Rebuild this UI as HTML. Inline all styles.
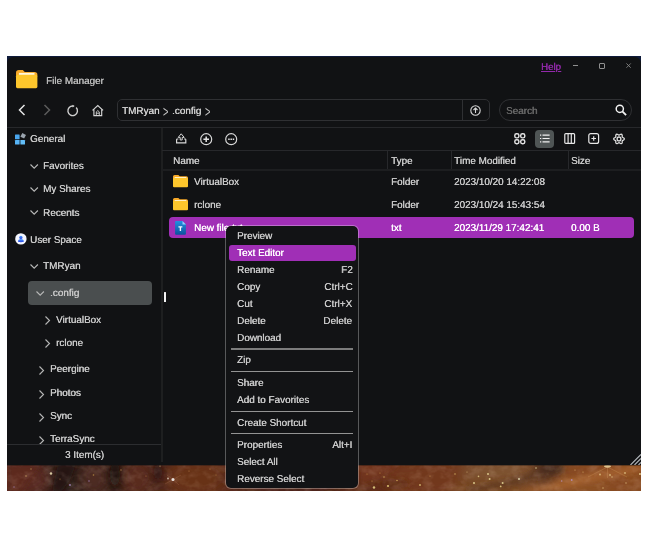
<!DOCTYPE html>
<html>
<head>
<meta charset="utf-8">
<title>File Manager</title>
<style>
*{box-sizing:border-box;margin:0;padding:0}
html,body{width:648px;height:550px;background:#fff;overflow:hidden}
body{font-family:"Liberation Sans",sans-serif;font-size:11px;color:#cbcbcb;position:relative}
.shot{position:absolute;left:7px;top:56px;width:634px;height:435px;overflow:hidden;
 background:#101b3c}
.shot .topstrip{position:absolute;left:0;top:0;width:100%;height:3px;background:#0e1a3a}
.win{position:absolute;left:0;top:1px;width:634px;height:408px;background:#111214;border-radius:6px 6px 0 0;overflow:hidden}
.abs{position:absolute;white-space:nowrap}
.t{position:absolute;white-space:nowrap;font-size:10px;line-height:14px;height:14px;margin-top:2px;text-rendering:geometricPrecision;transform:scaleX(.99);transform-origin:0 50%;text-shadow:0.3px 0 0 currentColor}
.sepc{font-size:16px;line-height:16px;height:16px;transform:scaleX(.58);color:#c4c4c4;text-shadow:none}
.line{position:absolute;background:#27282b}
svg{position:absolute;overflow:visible}
.menu{position:absolute;left:218px;top:169px;width:134px;height:264px;background:#121315;border:1px solid rgba(255,255,255,.3);background-clip:padding-box;border-radius:6px}
.menu .t{left:11px}
.menu .r{left:auto;right:5.7px;transform-origin:100% 50%}
.menu .sep{position:absolute;left:5px;width:122px;height:1px;background:#939393}
</style>
</head>
<body>
<div class="shot">
 <div class="topstrip"></div>
 <svg style="left:0;top:408px" width="634" height="27" viewBox="7 464 634 27" preserveAspectRatio="none">
<defs><filter id="bl" x="-20%" y="-50%" width="140%" height="200%"><feGaussianBlur stdDeviation="6"/></filter><filter id="bl2" x="-20%" y="-50%" width="140%" height="200%"><feGaussianBlur stdDeviation="2.5"/></filter><filter id="sb"><feGaussianBlur stdDeviation="0.6"/></filter>
<filter id="nz" x="0" y="0" width="100%" height="100%"><feTurbulence type="fractalNoise" baseFrequency="0.09 0.12" numOctaves="3" seed="7" result="n"/><feColorMatrix in="n" type="matrix" values="0 0 0 0 1  0 0 0 0 0.75  0 0 0 0 0.6  0.9 0.3 0 0 -0.52"/></filter>
<linearGradient id="bgl" x1="0" x2="1" y1="0" y2="0"><stop offset="0" stop-color="#4e271f"/><stop offset="0.12" stop-color="#321f1a"/><stop offset="0.28" stop-color="#5e2d1b"/><stop offset="0.45" stop-color="#5a2a1b"/><stop offset="0.62" stop-color="#6e361e"/><stop offset="0.8" stop-color="#7a4c2b"/><stop offset="0.9" stop-color="#814923"/><stop offset="1" stop-color="#864b22"/></linearGradient></defs>
<rect x="7" y="464" width="634" height="27" fill="url(#bgl)"/>
<g filter="url(#bl)">
<ellipse cx="22" cy="478" rx="26" ry="18" fill="#5a2c22"/>
<ellipse cx="65" cy="478" rx="15" ry="18" fill="#2b1a16"/>
<ellipse cx="94" cy="478" rx="13" ry="18" fill="#4e2a20"/>
<ellipse cx="115" cy="476" rx="8" ry="18" fill="#22130f"/>
<ellipse cx="137" cy="478" rx="14" ry="18" fill="#5a2b1d"/>
<ellipse cx="158" cy="474" rx="7" ry="14" fill="#3a1c14"/>
<ellipse cx="196" cy="478" rx="30" ry="18" fill="#683019"/>
<ellipse cx="292" cy="478" rx="70" ry="18" fill="#4a2418"/>
<ellipse cx="385" cy="474" rx="30" ry="14" fill="#6c321d"/>
<ellipse cx="372" cy="487" rx="22" ry="7" fill="#5c2c18"/>
<ellipse cx="430" cy="478" rx="40" ry="18" fill="#72391e"/>
<ellipse cx="495" cy="474" rx="34" ry="12" fill="#7e5230"/>
<ellipse cx="490" cy="487" rx="40" ry="7" fill="#75441f"/>
<ellipse cx="548" cy="470" rx="14" ry="12" fill="#553624"/>
<ellipse cx="548" cy="487" rx="14" ry="7" fill="#6c3e21"/>
<ellipse cx="600" cy="478" rx="45" ry="18" fill="#874a20"/>
<ellipse cx="580" cy="487" rx="30" ry="7" fill="#8e5225"/>
<ellipse cx="635" cy="470" rx="14" ry="10" fill="#8a4c1f"/>
</g>
<g filter="url(#bl2)"><path d="M515 492 L560 481 L608 469 L641 465 L641 471 L585 484 L550 492 Z" fill="#a5622e" opacity="0.8"/><path d="M470 492 L520 484 L552 474 L560 466 L540 464 L528 474 L500 482 L465 488 Z" fill="#5a341f" opacity="0.75"/><ellipse cx="552" cy="469" rx="12" ry="6" fill="#46291d" opacity="0.8"/><path d="M7 464 L40 464 L30 478 L22 491 L7 491Z" fill="#5e2a1f" opacity="0.7"/><path d="M58 464 L76 464 L70 480 L62 491 L52 491Z" fill="#241511" opacity="0.7"/><ellipse cx="115" cy="474" rx="5" ry="12" fill="#1e110d" opacity="0.7"/><ellipse cx="158" cy="472" rx="4" ry="8" fill="#2e1711" opacity="0.6"/><path d="M358 464 L400 464 L380 478 L360 486Z" fill="#76381f" opacity="0.6"/><ellipse cx="395" cy="484" rx="14" ry="5" fill="#5e2e18" opacity="0.6"/></g>
<rect x="7" y="464" width="634" height="27" filter="url(#nz)" opacity="0.35"/>
<g filter="url(#sb)" opacity="0.85"><path d="M607.5 467 L588 477 M607.5 467 L627 477 M607.5 467 L607.5 478" stroke="#c89058" stroke-width="0.8" opacity="0.55"/><ellipse cx="607.5" cy="466.3" rx="3.5" ry="1.4" fill="#f0d8a0"/><path d="M173 479.6 L165 484 M173 479.6 L181 475 M173 479.6 L179 485 M173 479.6 L167 475" stroke="#b88060" stroke-width="0.6" opacity="0.5"/>
<circle cx="51" cy="473.5" r="1.2" fill="#f0e4b8"/>
<circle cx="26" cy="476" r="0.8" fill="#c8a068"/>
<circle cx="70" cy="485" r="0.9" fill="#a88ac0"/>
<circle cx="31" cy="469" r="0.7" fill="#b89058"/>
<circle cx="89" cy="481" r="0.8" fill="#a07ab0"/>
<circle cx="93.5" cy="475" r="0.8" fill="#b89048"/>
<circle cx="14" cy="487" r="0.7" fill="#a080b0"/>
<circle cx="60" cy="479" r="0.6" fill="#b89048"/>
<circle cx="173" cy="479.6" r="1.5" fill="#ffffff"/>
<circle cx="168" cy="478.5" r="0.9" fill="#d8c8b8"/>
<circle cx="121" cy="470" r="0.7" fill="#c09058"/>
<circle cx="146" cy="476" r="0.6" fill="#b88048"/>
<circle cx="160" cy="466" r="0.7" fill="#c8a070"/>
<circle cx="189" cy="471" r="0.6" fill="#c08850"/>
<circle cx="210" cy="469" r="0.6" fill="#c08850"/>
<circle cx="216" cy="475" r="0.6" fill="#b88048"/>
<circle cx="374" cy="487.5" r="1.2" fill="#e8d888"/>
<circle cx="388" cy="486" r="1.1" fill="#e8d078"/>
<circle cx="420" cy="485" r="1.0" fill="#d8b870"/>
<circle cx="384" cy="477" r="0.8" fill="#d0a858"/>
<circle cx="397" cy="480.5" r="0.8" fill="#d0a858"/>
<circle cx="455" cy="474" r="0.8" fill="#d0a860"/>
<circle cx="367" cy="474" r="0.6" fill="#c89850"/>
<circle cx="380" cy="473" r="0.6" fill="#c89850"/>
<circle cx="372" cy="481" r="0.6" fill="#c89850"/>
<circle cx="430" cy="476" r="0.6" fill="#d0a058"/>
<circle cx="488" cy="474" r="1.0" fill="#e8d898"/>
<circle cx="489.6" cy="479" r="1.0" fill="#e8d898"/>
<circle cx="474" cy="483" r="1.0" fill="#e8d898"/>
<circle cx="502.6" cy="483" r="1.0" fill="#e8d898"/>
<circle cx="519" cy="479" r="1.0" fill="#e8e0b8"/>
<circle cx="500.7" cy="486.4" r="0.9" fill="#e8d088"/>
<circle cx="478.5" cy="476.4" r="0.8" fill="#e0c888"/>
<circle cx="536" cy="468" r="0.8" fill="#e0d098"/>
<circle cx="467" cy="472" r="0.6" fill="#d0b078"/>
<circle cx="600" cy="474.5" r="0.9" fill="#e0c080"/>
<circle cx="610" cy="475" r="0.9" fill="#e0c080"/>
<circle cx="625" cy="473" r="0.9" fill="#e0c080"/>
<circle cx="640" cy="474" r="1.0" fill="#f0d898"/>
<circle cx="571.7" cy="480" r="0.9" fill="#b890c0"/>
<circle cx="561.7" cy="481" r="0.8" fill="#b890b8"/>
<circle cx="612" cy="477" r="0.7" fill="#e0c080"/>
<circle cx="626" cy="483" r="0.7" fill="#e0c080"/>
<circle cx="603" cy="488" r="0.7" fill="#e0c080"/>
<circle cx="583" cy="472" r="0.6" fill="#e0b878"/>
<circle cx="575" cy="470" r="0.6" fill="#e0b878"/>
</g></svg>
 <div class="win">
  <!-- title bar -->
  <svg style="left:9.2px;top:13px" width="21.4" height="18.3" viewBox="0 0 22 19" preserveAspectRatio="none">
   <path d="M0 3 Q0 0 3 0 L7 0 L9 2 L19 2 Q22 2 22 5 L22 6 L0 6 Z" fill="#f7a928"/>
   <rect x="3" y="3" width="16" height="3" fill="#fff6dc"/>
   <rect x="0" y="5" width="22" height="14" rx="1.5" fill="#fdc62c"/>
  </svg>
  <div class="t" style="left:39px;top:16px;color:#bcbcbc">File Manager</div>
  <div class="t" style="left:534px;top:2px;color:#9329ab;text-decoration:underline;transform:scaleX(.97)">Help</div>
  <div class="line" style="left:565.5px;top:8.3px;width:5px;height:1px;background:#909090"></div>
  <div class="abs" style="left:592px;top:6.2px;width:5.6px;height:5.6px;border:1px solid #909090;border-radius:1px"></div>
  <svg style="left:618.6px;top:6.4px" width="5.2" height="5.2" viewBox="0 0 6 6"><path d="M0.5 0.5 L5.5 5.5 M5.5 0.5 L0.5 5.5" stroke="#8a8a8a" stroke-width="1" fill="none"/></svg>

  <!-- nav bar -->
  <svg style="left:11px;top:47px" width="8" height="12" viewBox="0 0 8 12"><path d="M6.5 1 L1.5 6 L6.5 11" stroke="#e6e6e6" stroke-width="1.5" fill="none"/></svg>
  <svg style="left:36px;top:47px" width="8" height="12" viewBox="0 0 8 12"><path d="M1.5 1 L6.5 6 L1.5 11" stroke="#5c5c5c" stroke-width="1.5" fill="none"/></svg>
  <svg style="left:59.8px;top:47.6px" width="11.6" height="11.6" viewBox="0 0 11.6 11.6"><path d="M9.2 2.5 A4.8 4.8 0 1 1 6.2 1.0" stroke="#cfcfcf" stroke-width="1.4" fill="none"/><path d="M5.6 -0.3 L7.7 1.1 L5.6 2.5 Z" fill="#cfcfcf"/></svg>
  <svg style="left:85px;top:47.6px" width="11.6" height="11.2" viewBox="0 0 11.6 11.2"><path d="M0.5 5.4 L5.8 0.6 L11.1 5.4 M1.9 4.4 L1.9 10.6 L9.7 10.6 L9.7 4.4" stroke="#d4d4d4" stroke-width="1.15" fill="none"/><path d="M4.3 10.4 L4.3 6.9 L5.8 5.6 L7.3 6.9 L7.3 10.4 M4.3 8.2 L7.3 8.2" stroke="#d4d4d4" stroke-width="0.9" fill="none"/></svg>
  <div class="abs" style="left:110px;top:42px;width:373px;height:22px;border:1px solid #2f3033;border-radius:5px"></div>
  <div class="line" style="left:455px;top:43px;width:1px;height:20px;background:#2f3033"></div>
  <div class="t" style="left:115px;top:46px;color:#d2d2d2">TMRyan</div><div class="t sepc" style="left:155.6px;top:45.7px">&gt;</div><div class="t" style="left:165px;top:46px;color:#d2d2d2">.config</div><div class="t sepc" style="left:198.2px;top:45.7px">&gt;</div>
  <svg style="left:463px;top:48px" width="11" height="11" viewBox="0 0 11 11"><circle cx="5.5" cy="5.5" r="4.7" stroke="#d8d8d8" stroke-width="1.1" fill="none"/><path d="M5.5 8 L5.5 3.2 M3.5 5 L5.5 3 L7.5 5" stroke="#d8d8d8" stroke-width="1.1" fill="none"/></svg>
  <div class="abs" style="left:492px;top:42px;width:133px;height:22px;border:1px solid #2f3033;border-radius:11px"></div>
  <div class="t" style="left:499px;top:46px;color:#6a6a6a">Search</div>
  <svg style="left:608px;top:47px" width="12" height="12" viewBox="0 0 13 13"><circle cx="5.2" cy="5.2" r="3.9" stroke="#f2f2f2" stroke-width="1.6" fill="none"/><path d="M8 8 L12 12" stroke="#f2f2f2" stroke-width="2"/></svg>
  <div class="line" style="left:0;top:70px;width:634px;height:1px"></div>

  <!-- sidebar -->
  <div class="line" style="left:154px;top:71px;width:2px;height:334px;background:#1e1f20"></div>
  <svg style="left:8px;top:76.3px" width="11" height="11.6" viewBox="0 0 11 11.6"><rect x="0" y="1.6" width="4.6" height="4.6" rx="0.5" fill="#4aa6ee"/><rect x="0" y="7" width="4.6" height="4.6" rx="0.5" fill="#56b4f6"/><rect x="5.4" y="7" width="4.6" height="4.6" rx="0.5" fill="#62bdf8"/><path d="M7.3 0 L11 1.9 L9.1 5.6 L5.4 3.7 Z" fill="#9aa3ad"/></svg>
  <div class="t" style="left:22.5px;top:74px">General</div>
  <svg style="left:22.7px;top:107px" width="8.4" height="5" viewBox="0 0 8.4 5"><path d="M0.5 0.5 L4.2 4.2 L7.9 0.5" stroke="#b6b6b6" stroke-width="1.12" fill="none"/></svg>
  <div class="t" style="left:36px;top:101px">Favorites</div>
  <svg style="left:22.7px;top:130px" width="8.4" height="5" viewBox="0 0 8.4 5"><path d="M0.5 0.5 L4.2 4.2 L7.9 0.5" stroke="#b6b6b6" stroke-width="1.12" fill="none"/></svg>
  <div class="t" style="left:36px;top:124px">My Shares</div>
  <svg style="left:22.7px;top:153px" width="8.4" height="5" viewBox="0 0 8.4 5"><path d="M0.5 0.5 L4.2 4.2 L7.9 0.5" stroke="#b6b6b6" stroke-width="1.12" fill="none"/></svg>
  <div class="t" style="left:36px;top:148px">Recents</div>
  <svg style="left:7.8px;top:176.4px" width="11.8" height="11.8" viewBox="0 0 12 12"><defs><linearGradient id="ug" x1="0" y1="0" x2="0" y2="1"><stop offset="0" stop-color="#4aa0ff"/><stop offset="1" stop-color="#2a3fe0"/></linearGradient></defs><circle cx="6" cy="6" r="5.8" fill="#f4f6ff"/><circle cx="6" cy="4.5" r="1.7" fill="url(#ug)"/><path d="M3 9 Q3 6.2 6 6.2 Q9 6.2 9 9 Q6 9.8 3 9Z" fill="url(#ug)"/></svg>
  <div class="t" style="left:22.5px;top:175px">User Space</div>
  <svg style="left:22.7px;top:207px" width="8.4" height="5" viewBox="0 0 8.4 5"><path d="M0.5 0.5 L4.2 4.2 L7.9 0.5" stroke="#b6b6b6" stroke-width="1.12" fill="none"/></svg>
  <div class="t" style="left:36px;top:201px">TMRyan</div>
  <div class="abs" style="left:21px;top:224px;width:124px;height:23.6px;background:#4a4e4f;border-radius:4px"></div>
  <svg style="left:28.5px;top:233.5px" width="8.4" height="5" viewBox="0 0 8.4 5"><path d="M0.5 0.5 L4.2 4.2 L7.9 0.5" stroke="#b6b6b6" stroke-width="1.12" fill="none"/></svg>
  <div class="t" style="left:43px;top:228px">.config</div>
  <svg style="left:38px;top:258.7px" width="5" height="9" viewBox="0 0 5 9"><path d="M0.5 0.5 L4.5 4.5 L0.5 8.5" stroke="#b6b6b6" stroke-width="1.12" fill="none"/></svg>
  <div class="t" style="left:49px;top:255px">VirtualBox</div>
  <svg style="left:38px;top:281.9px" width="5" height="9" viewBox="0 0 5 9"><path d="M0.5 0.5 L4.5 4.5 L0.5 8.5" stroke="#b6b6b6" stroke-width="1.12" fill="none"/></svg>
  <div class="t" style="left:49px;top:278px">rclone</div>
  <svg style="left:32px;top:309px" width="5" height="9" viewBox="0 0 5 9"><path d="M0.5 0.5 L4.5 4.5 L0.5 8.5" stroke="#b6b6b6" stroke-width="1.12" fill="none"/></svg>
  <div class="t" style="left:43px;top:304px">Peergine</div>
  <svg style="left:32px;top:332.7px" width="5" height="9" viewBox="0 0 5 9"><path d="M0.5 0.5 L4.5 4.5 L0.5 8.5" stroke="#b6b6b6" stroke-width="1.12" fill="none"/></svg>
  <div class="t" style="left:43px;top:328px">Photos</div>
  <svg style="left:32px;top:355.7px" width="5" height="9" viewBox="0 0 5 9"><path d="M0.5 0.5 L4.5 4.5 L0.5 8.5" stroke="#b6b6b6" stroke-width="1.12" fill="none"/></svg>
  <div class="t" style="left:43px;top:351px">Sync</div>
  <svg style="left:32px;top:378.7px" width="5" height="9" viewBox="0 0 5 9"><path d="M0.5 0.5 L4.5 4.5 L0.5 8.5" stroke="#b6b6b6" stroke-width="1.12" fill="none"/></svg>
  <div class="t" style="left:43px;top:374px">TerraSync</div>
  <div class="abs" style="left:0;top:387px;width:154px;height:21px;background:#111214;border-top:1px solid #2c2d30"></div>
  <div class="t" style="left:58px;top:390px">3 Item(s)</div>
  <div class="abs" style="left:156.8px;top:235px;width:2.7px;height:10px;background:#f4f4f4;border-radius:0.5px"></div>

  <!-- toolbar -->
  <svg style="left:169px;top:76.4px" width="10.4" height="10.4" viewBox="0 0 10.4 10.4"><path d="M2.2 4.4 L5.2 0.8 L8.2 4.4 L6.2 4.4 L6.2 7 L4.2 7 L4.2 4.4 Z" stroke="#d8d8d8" stroke-width="1" fill="none" stroke-linejoin="round"/><path d="M2.4 6 L1.2 6 Q0.6 6 0.6 6.8 L0.6 9.8 L9.8 9.8 L9.8 6.8 Q9.8 6 9.2 6 L8 6" stroke="#d8d8d8" stroke-width="1.2" fill="none"/></svg>
  <svg style="left:192.7px;top:75.6px" width="12.4" height="12.4" viewBox="0 0 12.4 12.4"><circle cx="6.2" cy="6.2" r="5.5" stroke="#d8d8d8" stroke-width="1.2" fill="none"/><path d="M3.4 6.2 L9 6.2 M6.2 3.4 L6.2 9" stroke="#e4e4e4" stroke-width="1.5"/></svg>
  <svg style="left:217.6px;top:75.6px" width="12.4" height="12.4" viewBox="0 0 12.4 12.4"><circle cx="6.2" cy="6.2" r="5.5" stroke="#d8d8d8" stroke-width="1.2" fill="none"/><path d="M3.2 6.2 L9.2 6.2" stroke="#e4e4e4" stroke-width="1.5" stroke-dasharray="1.5 0.75"/></svg>

  <svg style="left:507px;top:76px" width="11.6" height="11.6" viewBox="0 0 11.6 11.6"><g stroke="#e2e2e2" stroke-width="1.45" fill="none"><rect x="0.8" y="0.8" width="4.1" height="4.1" rx="1.7"/><rect x="6.7" y="0.8" width="4.1" height="4.1" rx="1.7"/><rect x="0.8" y="6.7" width="4.1" height="4.1" rx="1.7"/><rect x="6.7" y="6.7" width="4.1" height="4.1" rx="1.7"/></g></svg>
  <div class="abs" style="left:528px;top:72.5px;width:18.5px;height:18.5px;background:#4f5555;border-radius:4px"></div>
  <svg style="left:533px;top:77.4px" width="9.6" height="9" viewBox="0 0 10 9"><g stroke="#f0f0f0" stroke-width="1.2"><path d="M0 1 L1.3 1 M2.6 1 L10 1 M0 4.5 L1.3 4.5 M2.6 4.5 L10 4.5 M0 8 L1.3 8 M2.6 8 L10 8"/></g></svg>
  <svg style="left:556.6px;top:76.4px" width="11.4" height="11" viewBox="0 0 11 11"><g stroke="#e6e6e6" stroke-width="1.2" fill="none"><rect x="0.6" y="0.6" width="9.8" height="9.8" rx="1"/><path d="M3.9 0.6 L3.9 10.4 M7.1 0.6 L7.1 10.4"/></g></svg>
  <svg style="left:581.3px;top:76.4px" width="11.4" height="11" viewBox="0 0 11 11"><g stroke="#e6e6e6" stroke-width="1.2" fill="none"><rect x="0.6" y="0.6" width="9.8" height="9.8" rx="2"/><path d="M3.2 5.5 L7.8 5.5 M5.5 3.2 L5.5 7.8"/></g></svg>
  <svg style="left:606px;top:76.3px" width="12" height="11.8" viewBox="0 0 12 11.8"><g stroke="#dedede" stroke-width="1.3" fill="none" stroke-linejoin="round"><path d="M6.00 2.10 L6.34 2.01 L6.72 1.79 L7.18 1.51 L7.68 1.27 L8.20 1.19 L8.65 1.31 L8.98 1.64 L9.17 2.13 L9.22 2.68 L9.20 3.22 L9.20 3.66 L9.29 4.00 L9.54 4.25 L9.92 4.47 L10.39 4.72 L10.85 5.04 L11.18 5.45 L11.30 5.90 L11.18 6.35 L10.85 6.76 L10.39 7.08 L9.92 7.33 L9.54 7.55 L9.29 7.80 L9.20 8.14 L9.20 8.58 L9.22 9.12 L9.17 9.67 L8.98 10.16 L8.65 10.49 L8.20 10.61 L7.68 10.53 L7.18 10.29 L6.72 10.01 L6.34 9.79 L6.00 9.70 L5.66 9.79 L5.28 10.01 L4.82 10.29 L4.32 10.53 L3.80 10.61 L3.35 10.49 L3.02 10.16 L2.83 9.67 L2.78 9.12 L2.80 8.58 L2.80 8.14 L2.71 7.80 L2.46 7.55 L2.08 7.33 L1.61 7.08 L1.15 6.76 L0.82 6.35 L0.70 5.90 L0.82 5.45 L1.15 5.04 L1.61 4.72 L2.08 4.47 L2.46 4.25 L2.71 4.00 L2.80 3.66 L2.80 3.22 L2.78 2.68 L2.83 2.13 L3.02 1.64 L3.35 1.31 L3.80 1.19 L4.32 1.27 L4.82 1.51 L5.28 1.79 L5.66 2.01 Z"/><circle cx="6" cy="5.9" r="1.9"/></g></svg>

  <!-- table head -->
  <div class="line" style="left:155px;top:93px;width:479px;height:1px"></div>
  <div class="line" style="left:155px;top:112px;width:479px;height:2px;background:#1d1e20"></div>
  <div class="line" style="left:380px;top:94px;width:1px;height:18px"></div>
  <div class="line" style="left:444px;top:94px;width:1px;height:18px"></div>
  <div class="line" style="left:561px;top:94px;width:1px;height:18px"></div>
  <div class="t" style="left:166px;top:96px">Name</div>
  <div class="t" style="left:384px;top:96px">Type</div>
  <div class="t" style="left:447px;top:96px">Time Modified</div>
  <div class="t" style="left:564px;top:96px">Size</div>

  <!-- rows -->
  <svg style="left:166px;top:118.4px" width="15" height="12.2" viewBox="0 0 14 12" preserveAspectRatio="none"><path d="M0 1.5 Q0 0 1.5 0 L5 0 L6.3 1.3 L12.5 1.3 Q14 1.3 14 2.8 L14 4 L0 4Z" fill="#f7a928"/><rect x="1.5" y="2" width="11" height="2" fill="#fff1c8"/><rect x="0" y="3" width="14" height="9" rx="1" fill="#fdc62c"/></svg>
  <div class="t" style="left:187px;top:117px">VirtualBox</div>
  <div class="t" style="left:384px;top:117px">Folder</div>
  <div class="t" style="left:447px;top:117px">2023/10/20 14:22:08</div>
  <svg style="left:166px;top:141.4px" width="15" height="12.2" viewBox="0 0 14 12" preserveAspectRatio="none"><path d="M0 1.5 Q0 0 1.5 0 L5 0 L6.3 1.3 L12.5 1.3 Q14 1.3 14 2.8 L14 4 L0 4Z" fill="#f7a928"/><rect x="1.5" y="2" width="11" height="2" fill="#fff1c8"/><rect x="0" y="3" width="14" height="9" rx="1" fill="#fdc62c"/></svg>
  <div class="t" style="left:187px;top:140px">rclone</div>
  <div class="t" style="left:384px;top:140px">Folder</div>
  <div class="t" style="left:447px;top:140px">2023/10/24 15:43:54</div>
  <div class="abs" style="left:162px;top:160px;width:465px;height:21px;background:#a02fb6;border-radius:4px"></div>
  <svg style="left:168px;top:163.6px" width="11" height="13.8" viewBox="0 0 11 14"><defs><linearGradient id="tg" x1="0" y1="0" x2="0" y2="1"><stop offset="0" stop-color="#2390e0"/><stop offset="1" stop-color="#0b529c"/></linearGradient></defs><path d="M1 0 L7.5 0 L11 3.5 L11 13 Q11 14 10 14 L1 14 Q0 14 0 13 L0 1 Q0 0 1 0Z" fill="url(#tg)"/><path d="M7.5 0 L11 3.5 L7.5 3.5Z" fill="#8fd0ff"/><path d="M3.4 6 L7.4 6 M5.4 6 L5.4 10.2" stroke="#f4f8ff" stroke-width="1.4"/></svg>
  <div class="t" style="left:187px;top:163px;color:#fff">New file.txt</div>
  <div class="t" style="left:384px;top:163px;color:#fff">txt</div>
  <div class="t" style="left:447px;top:163px;color:#fff">2023/11/29 17:42:41</div>
  <div class="t" style="left:564px;top:163px;color:#fff">0.00 B</div>

  <!-- resize grip -->
  <svg style="left:620px;top:395px" width="14" height="13" viewBox="0 0 14 13"><path d="M3.5 13 L14 2.5 M7.5 13 L14 6.5 M11.5 13 L14 10.5" stroke="#b4b8bc" stroke-width="1.1"/></svg>
 </div>

 <div class="abs" style="left:0;top:409px;width:634px;height:1px;background:rgba(17,18,20,.35)"></div>
 <!-- context menu -->
 <div class="menu">
  <div class="t" style="top:2px">Preview</div>
  <div class="abs" style="left:2.6px;top:19px;width:127px;height:16px;background:#a02fb6;border-radius:3px"></div>
  <div class="t" style="top:19px;color:#fff">Text Editor</div>
  <div class="t" style="top:36px">Rename</div><div class="t r" style="top:36px">F2</div>
  <div class="t" style="top:53px">Copy</div><div class="t r" style="top:53px">Ctrl+C</div>
  <div class="t" style="top:70px">Cut</div><div class="t r" style="top:70px">Ctrl+X</div>
  <div class="t" style="top:87px">Delete</div><div class="t r" style="top:87px">Delete</div>
  <div class="t" style="top:104px">Download</div>
  <div class="sep" style="top:122px;height:2px;background:#7c7c7c"></div>
  <div class="t" style="top:126px">Zip</div>
  <div class="sep" style="top:145px"></div>
  <div class="t" style="top:149px">Share</div>
  <div class="t" style="top:166px">Add to Favorites</div>
  <div class="sep" style="top:185px"></div>
  <div class="t" style="top:189px">Create Shortcut</div>
  <div class="sep" style="top:207px"></div>
  <div class="t" style="top:211px">Properties</div><div class="t r" style="top:211px">Alt+I</div>
  <div class="t" style="top:228px">Select All</div>
  <div class="t" style="top:245px">Reverse Select</div>
 </div>
</div>
</body>
</html>
